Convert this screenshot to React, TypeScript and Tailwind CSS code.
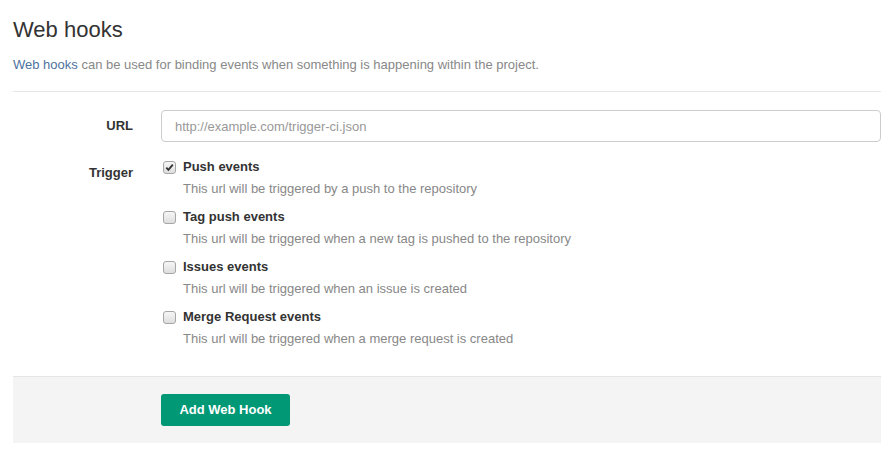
import React from "react"

const triggers = [
  { title: "Push events", help: "This url will be triggered by a push to the repository", checked: true },
  { title: "Tag push events", help: "This url will be triggered when a new tag is pushed to the repository", checked: false },
  { title: "Issues events", help: "This url will be triggered when an issue is created", checked: false },
  { title: "Merge Request events", help: "This url will be triggered when a merge request is created", checked: false },
]

function Checkbox({ checked }: { checked: boolean }) {
  return (
    <span className="mt-[3px] ml-[2px] flex h-[13px] w-[13px] shrink-0 items-center justify-center rounded-[3px] border border-[#a6a6a6] bg-gradient-to-b from-[#f6f6f6] to-[#dedede]">
      {checked && (
        <svg width="9" height="9" viewBox="0 0 9 9">
          <path d="M1.3 4.6 L3.4 6.8 L7.8 1.6" fill="none" stroke="#333" strokeWidth="1.8" />
        </svg>
      )}
    </span>
  )
}

export default function App() {
  return (
    <div className="min-h-[458px] bg-white pl-[13px] pr-[14px] font-['Liberation_Sans',Arial,sans-serif] text-[13px] text-[#333]">
      <h3 className="pt-[16px] text-[22px] leading-[27px] text-[#333]">Web hooks</h3>

      <p className="mt-[13px] leading-[18px] text-[#888]">
        <span className="text-[#4d72a0]">Web hooks</span> can be used for binding events when something is happening within the project.
      </p>

      <div className="mt-[17px] border-t border-[#e7e7e7]" />

      <form className="mt-[18px]">
        {/* URL row */}
        <div className="flex items-center gap-[28px]">
          <label className="w-[120px] shrink-0 text-right font-bold">URL</label>
          <input
            type="text"
            placeholder="http://example.com/trigger-ci.json"
            className="h-[32px] flex-1 rounded-[4px] border border-[#ccc] bg-white px-[13px] text-[13px] text-[#333] placeholder:text-[#999] outline-none"
          />
        </div>

        {/* Trigger row */}
        <div className="mt-[16px] flex gap-[28px]">
          <label className="w-[120px] shrink-0 pt-[6px] text-right font-bold leading-[18px]">Trigger</label>
          <div className="flex flex-col gap-[10px]">
            {triggers.map((t) => (
              <div key={t.title} className="flex gap-[7px]">
                <Checkbox checked={t.checked} />
                <div>
                  <div className="font-bold leading-[18px] text-[#333]">{t.title}</div>
                  <p className="mt-[4px] leading-[18px] text-[#888]">{t.help}</p>
                </div>
              </div>
            ))}
          </div>
        </div>

        {/* Actions */}
        <div className="mt-[28px] border-t border-[#e5e5e5] bg-[#f4f4f4] pt-[17px] pb-[17px] pl-[148px]">
          <button
            type="button"
            className="h-[32px] w-[129px] rounded-[3px] bg-[#019875] font-bold text-white"
          >
            Add Web Hook
          </button>
        </div>
      </form>
    </div>
  )
}
